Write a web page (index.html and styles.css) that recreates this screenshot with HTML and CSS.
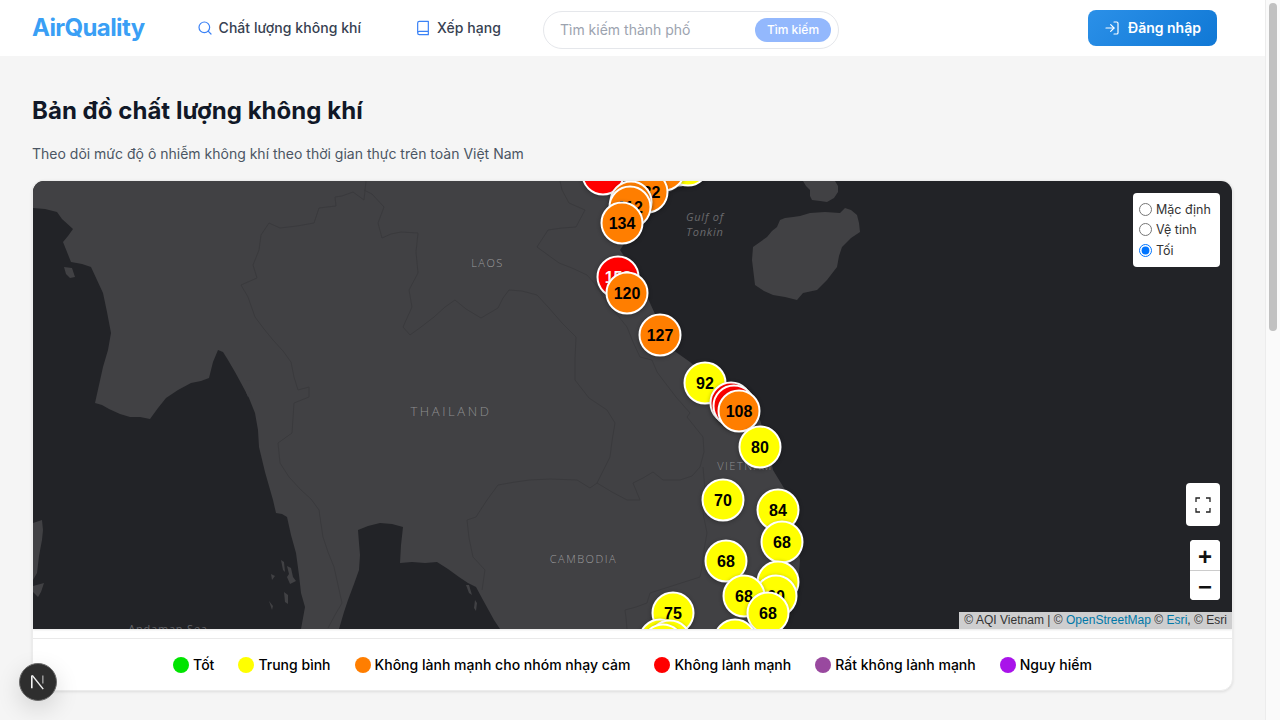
FILE: index.html
```html
<!DOCTYPE html>
<html lang="vi">
<head>
<meta charset="utf-8">
<title>AirQuality</title>
<link rel="stylesheet" href="styles.css">
</head>
<body>
<div class="app">
  <div class="page">
    <header class="topbar">
      <a class="logo">AirQuality</a>
      <nav class="nav">
        <a class="nav-item">
          <svg class="icon icon-blue" viewBox="0 0 24 24"><circle cx="11" cy="11" r="8"/><path d="m21 21-4.3-4.3"/></svg>
          <span>Chất lượng không khí</span>
        </a>
        <a class="nav-item">
          <svg class="icon icon-blue" viewBox="0 0 24 24"><path d="M4 19.5v-15A2.5 2.5 0 0 1 6.5 2H20v20H6.5a2.5 2.5 0 0 1 0-5H20"/></svg>
          <span>Xếp hạng</span>
        </a>
      </nav>
      <form class="search">
        <span class="search-placeholder">Tìm kiếm thành phố</span>
        <span class="search-btn">Tìm kiếm</span>
      </form>
      <a class="login">
        <svg class="icon" viewBox="0 0 24 24"><path d="M15 3h4a2 2 0 0 1 2 2v14a2 2 0 0 1-2 2h-4"/><path d="m10 17 5-5-5-5"/><path d="M15 12H3"/></svg>
        <span>Đăng nhập</span>
      </a>
    </header>

    <main class="content">
      <h1 class="title">Bản đồ chất lượng không khí</h1>
      <p class="subtitle">Theo dõi mức độ ô nhiễm không khí theo thời gian thực trên toàn Việt Nam</p>

      <section class="card">
        <div class="map">
          <svg class="basemap" viewBox="33 181 1199 448" preserveAspectRatio="none">
            <path class="land" d="M33 181V208L45 209 57 212 62 219 73 229 68 236 63 242 67 252 71 262 82 264 91 267 97 280 103 293 107 312 111 333 108 350 103 367 99 385 95 403 102 405 109 409 120 414 130 417 140 417 150 419 158 408 166 398 178 390 191 383 201 381 209 378 213 362 218 350 223 352 228 360 235 372 241 383 249 398 255 413 258 430 259 447 265 472 273 500 276 513 282 514 287 517 291 535 296 553 299 575 301 593 305 607 301 629H339L344 612 348 600 354 584 359 570 360 555 359 543 358 530 368 526 380 523 392 524 403 527 401 545 400 563 412 562 425 563 437 562 448 569 459 577 468 583 476 587 483 600 494 620 500 629H760L785 610 797 600 800 560 792 515 787 493 773 470 768 445 760 420 745 405 725 395 705 375 690 362 673 350 660 325 650 303 638 277 628 262 620 250 632 232 650 200 670 192 685 184 700 181Z"/>
            <path class="land" d="M753 247 752 260 755 285 764 291 773 295 785 297 797 300 803 293 817 290 827 280 837 267 839 256 842 247 851 238 860 232 859 223 857 215 851 210 845 208 840 213 825 212 810 213 800 216 793 217 785 218 780 220 777 227 772 231 767 237Z"/>
            <path class="land" d="M803 181 806 186 810 190 810 196 812 200 820 201 827 202 834 198 838 192 838 186 835 181Z"/>
            <path class="land" d="M33 523 42 520 43 530 42 540 39 556 37 573 33 580Z"/>
            <path class="land" d="M33 586 44 583 41 592 38 597 33 592Z"/>
            <path class="land" d="M64 267 72 268 75 277 70 278 66 274Z"/>
            <path class="land" d="M246 381 251 380 251 390 248 397 246 392Z"/>
            <path class="land" d="M281 560 284 562 285 572 283 570Z"/>
            <path class="land" d="M287 566 291 568 293 577 296 581 290 584 287 577 289 574Z"/>
            <path class="land" d="M271 574 275 576 272 580Z"/>
            <path class="land" d="M284 592 288 595 288 604 285 602Z"/>
            <path class="land" d="M269 601 273 606 272 610Z"/>
            <path class="land" d="M466 585 469 585 472 595 469 593Z"/>
            <path class="land" d="M475 600 477 603 476 611 474 608Z"/>

            <path class="border" d="M366 181 364 200 353 192 342 196 335 197 336 206 327 207 319 208 314 223 297 226 280 228 269 223 261 235 259 250 253 265 257 278 241 285 248 297 255 317 264 329 273 340 283 351 291 362 294 377 298 390 309 387 309 397 294 403 293 418 292 433 278 443 280 463 289 477 301 490 311 499 319 510 321 524 323 537 328 552 334 567 338 585 342 603 335 615 328 628"/>
            <path class="border" d="M364 190 372 194 384 207 378 223 382 238 391 234 401 232 418 233 416 252 418 273 409 290 412 307 403 327 410 335 421 327 434 317 445 307 455 300 466 309 476 315 481 318 498 308 503 298 509 290 522 291 537 295 549 308 562 323 576 337 575 359 575 380 589 398 607 410 615 423 612 441 610 457 603 471 597 483 590 488 577 480 550 479 530 480 515 482 498 485 487 500 476 517 467 520 469 538 473 557 485 570 482 590"/>
            <path class="border" d="M560 181 562 190 569 203 585 210 576 227 562 228 548 230 537 247 548 255 559 263 572 268 587 275 596 285 603 297 615 312 627 327 633 342 640 357 652 360 657 372 663 380 676 397 690 413 687 417 695 427 703 437 704 452 700 467 692 476 680 480 663 480 653 472 643 478 633 483 640 500 627 500 612 492 597 483"/>
            <path class="border" d="M703 467 705 490 703 513 707 533 704 550 702 567 700 577 675 585 650 593 647 603 636 607 625 610 626 618 627 629"/>

            <text class="label label-sm" x="487.5" y="267">LAOS</text>
            <text class="label label-lg" x="451" y="416">THAILAND</text>
            <text class="label label-sm" x="583.5" y="563">CAMBODIA</text>
            <text class="label label-sm label-vn" x="745" y="470">VIETNAM</text>
            <text class="label label-gulf" x="705" y="221">Gulf of</text>
            <text class="label label-gulf" x="705" y="236">Tonkin</text>
            <text class="label label-sea" x="168" y="633">Andaman Sea</text>
          </svg>

          <div class="pin green" style="left:645px;top:-16px"></div>
          <div class="pin yellow" style="left:655px;top:-16px"></div>
          <div class="pin orange" style="left:631px;top:-11px"></div>
          <div class="pin orange" style="left:614px;top:11px">132</div>
          <div class="pin red" style="left:570px;top:-7px">152</div>
          <div class="pin orange" style="left:598px;top:21px">132</div>
          <div class="pin orange" style="left:597px;top:26px">112</div>
          <div class="pin orange" style="left:589px;top:42px">134</div>
          <div class="pin red" style="left:585px;top:96px">158</div>
          <div class="pin orange" style="left:594px;top:112px">120</div>
          <div class="pin orange" style="left:627px;top:154px">127</div>
          <div class="pin yellow" style="left:672px;top:202px">92</div>
          <div class="pin red" style="left:698px;top:222px">155</div>
          <div class="pin red" style="left:701px;top:225px">152</div>
          <div class="pin orange" style="left:706px;top:230px">108</div>
          <div class="pin yellow" style="left:727px;top:266px">80</div>
          <div class="pin yellow" style="left:690px;top:319px">70</div>
          <div class="pin yellow" style="left:745px;top:329px">84</div>
          <div class="pin yellow" style="left:749px;top:361px">68</div>
          <div class="pin yellow" style="left:693px;top:380px">68</div>
          <div class="pin yellow" style="left:745px;top:401px">62</div>
          <div class="pin yellow" style="left:743px;top:415px">60</div>
          <div class="pin yellow" style="left:711px;top:415px">68</div>
          <div class="pin yellow" style="left:735px;top:432px">68</div>
          <div class="pin yellow" style="left:640px;top:432px">75</div>
          <div class="pin yellow" style="left:627px;top:459px"></div>
          <div class="pin yellow" style="left:637px;top:460px"></div>
          <div class="pin yellow" style="left:630px;top:464px"></div>
          <div class="pin yellow" style="left:702px;top:459px"></div>

          <form class="style-switch">
            <label class="style-option"><input type="radio" name="style"><span>Mặc định</span></label>
            <label class="style-option"><input type="radio" name="style"><span>Vệ tinh</span></label>
            <label class="style-option"><input type="radio" name="style" checked><span>Tối</span></label>
          </form>

          <div class="map-tools">
            <button class="tool-fullscreen" type="button" aria-label="Toàn màn hình">
              <svg viewBox="0 0 16 16"><path d="M1 5V1H5M11 1H15V5M15 11V15H11M5 15H1V11"/></svg>
            </button>
            <div class="zoom-group">
              <button class="zoom-btn" type="button">+</button>
              <button class="zoom-btn" type="button">−</button>
            </div>
          </div>

          <div class="attribution">© AQI Vietnam | © <a>OpenStreetMap</a> © <a>Esri</a>, © Esri</div>
        </div>

        <div class="legend">
          <div class="legend-item"><i class="dot dot-green"></i>Tốt</div>
          <div class="legend-item"><i class="dot dot-yellow"></i>Trung bình</div>
          <div class="legend-item"><i class="dot dot-orange"></i>Không lành mạnh cho nhóm nhạy cảm</div>
          <div class="legend-item"><i class="dot dot-red"></i>Không lành mạnh</div>
          <div class="legend-item"><i class="dot dot-purple"></i>Rất không lành mạnh</div>
          <div class="legend-item"><i class="dot dot-violet"></i>Nguy hiểm</div>
        </div>
      </section>
    </main>

    <div class="next-badge">
      <svg viewBox="0 0 16 16"><path d="M3.5 3.2V12.5" class="n-left"/><path d="M3.8 3.2 11.8 13.2" class="n-diag"/><path d="M11.5 3.2V9" class="n-right"/></svg>
    </div>
  </div>
  <div class="scrollbar"><div class="scroll-thumb"></div></div>
</div>
</body>
</html>
```

FILE: styles.css
```css
* { box-sizing: border-box; }
html, body { margin: 0; height: 100%; overflow: hidden; }
body { font-family: Inter, "Liberation Sans", sans-serif; background: #f5f5f5; color: #111827; }

.app { display: flex; height: 720px; }
.page { position: relative; flex: 1; min-width: 0; overflow: hidden; }
.scrollbar { width: 15px; background: #fafafa; border-left: 1px solid #ececec; padding: 3px 3px 0 3px; }
.scroll-thumb { height: 328px; background: #c1c1c1; border-radius: 4px; }

.topbar { display: flex; align-items: center; height: 56px; background: #fff; padding: 0 48px 0 32px; }
.logo { font-size: 24px; line-height: 32px; font-weight: 700; letter-spacing: -0.6px; color: #3a9ff5; margin-right: 53px; }
.nav { display: flex; gap: 55px; margin-right: 42px; }
.nav-item { display: flex; align-items: center; gap: 5px; font-size: 14px; line-height: 20px; font-weight: 500; letter-spacing: .05px; color: #374151; }
.nav-item .icon { margin: 0 1px 0 -1px; }
.icon { width: 16px; height: 16px; fill: none; stroke: currentColor; stroke-width: 1.8; stroke-linecap: round; stroke-linejoin: round; flex: none; }
.icon-blue { color: #3b82f6; }

.search { display: flex; align-items: center; justify-content: space-between; width: 296px; height: 38px; margin-top: 3px; padding: 0 7px 0 16px; border: 1px solid #e5e7eb; border-radius: 19px; background: #fff; }
.search-placeholder { font-size: 14px; line-height: 20px; color: #9ca3af; }
.search-btn { display: flex; align-items: center; justify-content: center; width: 76px; height: 24px; border-radius: 12px; background: #93b8fd; color: #fff; font-size: 12px; line-height: 16px; font-weight: 500; }

.login { display: flex; align-items: center; justify-content: center; gap: 8px; width: 129px; height: 36px; margin-left: auto; border-radius: 8px; background: linear-gradient(135deg, #2b90e8, #1078d5); color: #fff; font-size: 14px; line-height: 20px; font-weight: 600; }

.content { padding: 39px 32px 0; }
.title { margin: 0 0 17px; font-size: 24px; line-height: 32px; font-weight: 700; letter-spacing: .04px; color: #111827; }
.subtitle { margin: 0 0 16px; font-size: 14px; line-height: 20px; color: #4b5563; }

.card { width: 1201px; height: 511px; border: 1px solid #ececec; border-radius: 12px; background: #fff; box-shadow: 0 1px 3px rgba(0,0,0,.1); overflow: hidden; }
.map { position: relative; height: 448px; background: #222327; overflow: hidden; box-shadow: 0 1px 2px rgba(0,0,0,.1); }
.basemap { position: absolute; inset: 0; width: 100%; height: 100%; display: block; }
.land { fill: #414144; }
.border { fill: none; stroke: #3a3a3d; stroke-width: 1; stroke-linejoin: round; }

.label { font-family: "Open Sans", "Liberation Sans", sans-serif; text-anchor: middle; fill: #9c9c9e; }
.label-sm { font-size: 11px; font-weight: 300; letter-spacing: 1.5px; }
.label-lg { font-size: 13px; font-weight: 300; letter-spacing: 2.6px; fill: #8e8e90; }
.label-vn { fill: #8f8f91; }
.label-gulf { font-size: 11px; font-style: italic; letter-spacing: .8px; fill: #6a6a6d; }
.label-sea { font-size: 11px; letter-spacing: .8px; fill: #66666a; }

.pin { position: absolute; display: flex; align-items: center; justify-content: center; width: 43px; height: 43px; transform: translate(-50%, -50%); border: 2px solid #fff; border-radius: 50%; box-shadow: 0 1px 4px rgba(0,0,0,.3); font: 700 16px "Liberation Sans", Arial, sans-serif; color: #000; }
.green { background: #00e400; }
.yellow { background: #ff0; }
.orange { background: #ff7e00; }
.red { background: #f00; color: #fff; }

.style-switch { position: absolute; top: 12px; right: 12px; display: flex; flex-direction: column; width: 87px; height: 74px; padding: 6.2px 6px 6px; border-radius: 4px; background: #fff; }
.style-option { display: flex; align-items: center; gap: 4px; height: 20.5px; font: 400 12.5px Inter, sans-serif; color: #333; }
.style-option input { width: 13px; height: 13px; margin: 0; }

.map-tools { position: absolute; right: 12px; top: 302px; display: flex; flex-direction: column; align-items: flex-end; gap: 14px; }
.tool-fullscreen { display: flex; align-items: center; justify-content: center; width: 34px; height: 43px; padding: 0; border: 0; border-radius: 4px; background: #fff; }
.tool-fullscreen svg { width: 16px; height: 16px; fill: none; stroke: #222; stroke-width: 1.3; }
.zoom-group { display: flex; flex-direction: column; width: 30px; height: 60px; border-radius: 4px; background: #fff; overflow: hidden; }
.zoom-btn { flex: 1; padding: 3px 0 0; border: 0; background: #fff; font: 700 24px/1 "Liberation Sans", Arial, sans-serif; color: #111; }
.zoom-btn + .zoom-btn { border-top: 1px solid #ccc; padding-top: 2px; }

.attribution { position: absolute; right: 0; bottom: 0; height: 17px; padding: 0 5px; background: rgba(255,255,255,.78); font: 400 12px/17px "Liberation Sans", Arial, sans-serif; letter-spacing: .02px; color: #333; white-space: nowrap; }
.attribution a { color: #0078a8; }

.legend { display: flex; align-items: center; justify-content: center; gap: 24px; height: 52px; margin-top: 9px; padding: 0; border-top: 1px solid #e9e9e9; }
.legend-item { display: flex; align-items: center; gap: 4px; font-size: 14px; line-height: 20px; font-weight: 500; letter-spacing: .012px; color: #000; }
.dot { width: 16px; height: 16px; border-radius: 50%; flex: none; }
.dot-green { background: #00e400; }
.dot-yellow { background: #ff0; }
.dot-orange { background: #ff7e00; }
.dot-red { background: #f00; }
.dot-purple { background: #99499f; }
.dot-violet { background: #a913ea; }

.next-badge { position: absolute; left: 19px; top: 663px; display: flex; align-items: center; justify-content: center; width: 38px; height: 38px; border-radius: 50%; background: #2e2e2e; border: 1px solid #6a6a6a; box-shadow: 0 8px 24px rgba(0,0,0,.14); }
.next-badge svg { width: 22px; height: 22px; fill: none; stroke-width: 1.1; }
.n-left { stroke: #fff; }
.n-diag { stroke: #eee; }
.n-right { stroke: #9a9a9a; }
```
